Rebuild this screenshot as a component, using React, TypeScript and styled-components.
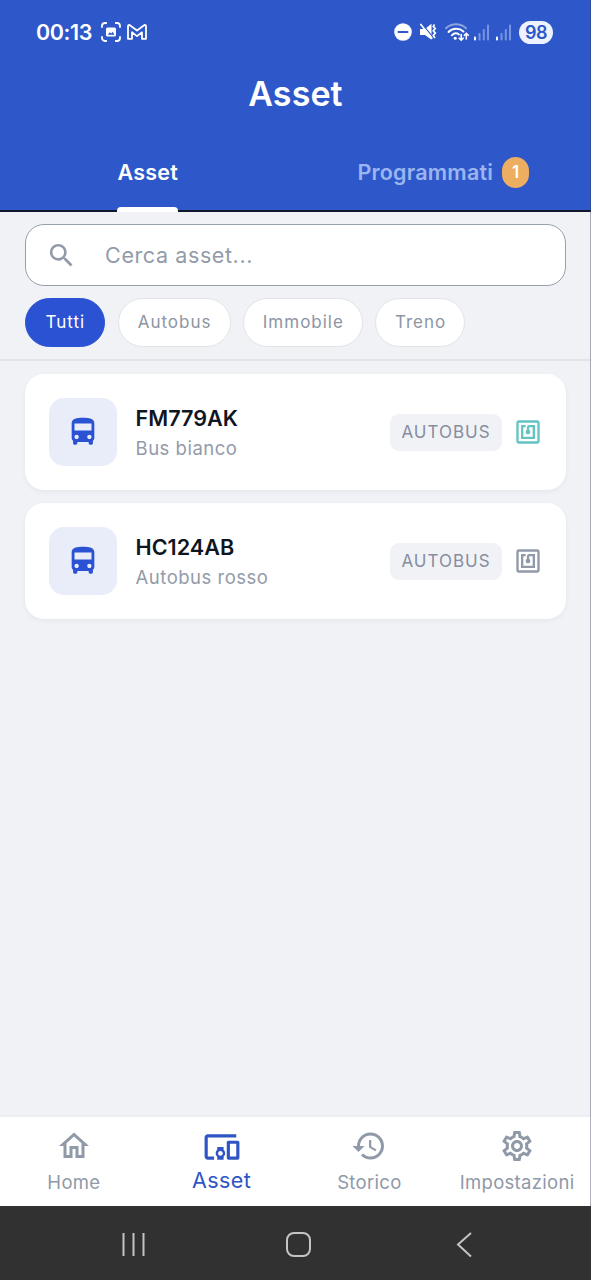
import React from 'react';
import styled, { createGlobalStyle } from 'styled-components';
import {
  MdDevicesOther,
  MdDirectionsBus,
  MdHistory,
  MdNfc,
  MdOutlineHome,
  MdOutlineSettings,
  MdSearch,
} from 'react-icons/md';

const GlobalStyle = createGlobalStyle`
  * { box-sizing: border-box; }
  body { margin: 0; background: #f1f2f6; }
  svg { display: block; flex: none; }
`;

const Screen = styled.div`
  position: relative;
  width: 591px;
  height: 1280px;
  display: flex;
  flex-direction: column;
  overflow: hidden;
  background: #f1f2f6;
  font-family: Inter, 'Liberation Sans', sans-serif;
  color: #929ba9;
`;

const EdgeLine = styled.div`
  position: absolute;
  top: 0;
  right: 0;
  width: 1px;
  height: 1206px;
  background: rgba(60, 66, 88, 0.4);
`;

const Header = styled.header`
  height: 212px;
  flex: none;
  display: flex;
  flex-direction: column;
  background: #2e58c9;
  border-bottom: 2px solid #10182c;
`;

const StatusBar = styled.div`
  height: 64px;
  padding: 0 38px 0 36px;
  display: flex;
  align-items: center;
  justify-content: space-between;
  color: #fff;
`;

const StatusGroup = styled.div`
  display: flex;
  align-items: center;
`;

const Clock = styled.span`
  width: 64.5px;
  font-size: 21.5px;
  font-weight: 600;
  letter-spacing: -0.4px;
  white-space: nowrap;
`;

const Battery = styled.span`
  width: 34px;
  height: 23px;
  margin-left: 7px;
  border-radius: 12px;
  background: #eef2ff;
  color: #2e58c9;
  font-size: 18px;
  font-weight: 600;
  line-height: 23px;
  letter-spacing: -0.4px;
  text-align: center;
`;

const Title = styled.h1`
  margin: 0;
  height: 60px;
  line-height: 59px;
  text-align: center;
  color: #fff;
  font-size: 34px;
  font-weight: 600;
  letter-spacing: 0.1px;
`;

const Tabs = styled.nav`
  height: 88px;
  margin-bottom: -2px;
  display: grid;
  grid-template-columns: 1fr 1fr;
`;

const Tab = styled.div<{ $active?: boolean }>`
  display: flex;
  align-items: center;
  justify-content: center;
  height: 88px;
  padding-top: 8px;
  color: ${(p) => (p.$active ? '#fff' : '#9bb5f0')};
  font-size: 21.5px;
  font-weight: 600;
  letter-spacing: 0.2px;
`;

const TabLabel = styled.span`
  line-height: 80px;
`;

const ActiveTab = styled.div`
  display: flex;
  flex-direction: column;
  align-items: center;
  width: 60px;
`;

const Indicator = styled.i`
  width: 61px;
  height: 5px;
  flex: none;
  border-radius: 4px 4px 0 0;
  background: #fff;
`;

const ActiveText = styled.span`
  height: 75px;
  line-height: 80px;
`;

const Badge = styled.span`
  width: 27px;
  height: 31px;
  margin-left: 9px;
  border-radius: 14px;
  background: #edae62;
  color: #fff;
  font-size: 17px;
  line-height: 31px;
  text-align: center;
  letter-spacing: 0;
`;

const Filters = styled.section`
  height: 149px;
  flex: none;
  padding: 12px 25px 0 24.6px;
  border-bottom: 2px solid #e2e4ea;
`;

const SearchBox = styled.div`
  height: 62px;
  padding-left: 20px;
  display: flex;
  align-items: center;
  gap: 28.5px;
  border: 1px solid #969fac;
  border-radius: 19px;
  background: #fff;
  font-size: 21.5px;
  letter-spacing: 0.6px;
`;

const Chips = styled.div`
  display: flex;
  gap: 12.5px;
  margin-top: 12px;
`;

const Chip = styled.span<{ $w: number; $active?: boolean }>`
  width: ${(p) => p.$w}px;
  height: 49px;
  border-radius: 25px;
  border: 1.5px solid ${(p) => (p.$active ? '#2a52d2' : '#e0e3e8')};
  background: ${(p) => (p.$active ? '#2a52d2' : '#fff')};
  color: ${(p) => (p.$active ? '#fff' : '#8c95a3')};
  font-size: 17px;
  font-weight: 400;
  line-height: 46px;
  letter-spacing: 1px;
  text-indent: 1px;
  text-align: center;
`;

const List = styled.main`
  flex: 1;
  display: flex;
  flex-direction: column;
  gap: 13px;
  padding: 13px 25px 13px 24.6px;
`;

const Card = styled.article`
  height: 116px;
  padding: 0 24px 0 24.4px;
  display: flex;
  align-items: center;
  border-radius: 19px;
  background: #fff;
  box-shadow: 0 2px 5px rgba(20, 30, 60, 0.05);
`;

const AssetIcon = styled.div`
  width: 68px;
  height: 68px;
  display: grid;
  place-items: center;
  border-radius: 15px;
  background: #e9edfa;
  color: #2a52d2;
`;

const AssetText = styled.div`
  flex: 1;
  margin-left: 18.6px;
  padding-top: 2px;
`;

const Plate = styled.div`
  color: #10161f;
  font-size: 21.6px;
  font-weight: 600;
  line-height: 30px;
  letter-spacing: 0;
`;

const Description = styled.div`
  font-size: 18.5px;
  line-height: 30px;
  letter-spacing: 0.5px;
`;

const Tag = styled.span`
  width: 112px;
  height: 37px;
  margin-right: 12.5px;
  border-radius: 9px;
  background: #f1f2f6;
  color: #858ea0;
  font-size: 17px;
  font-weight: 400;
  line-height: 37px;
  letter-spacing: 1px;
  text-indent: 1px;
  text-align: center;
`;

const BottomNav = styled.nav`
  height: 89px;
  flex: none;
  display: grid;
  grid-template-columns: repeat(4, 1fr);
  background: #fff;
  box-shadow: 0 -1px 4px rgba(20, 30, 60, 0.03);
`;

const NavItem = styled.div<{ $active?: boolean }>`
  display: flex;
  flex-direction: column;
  align-items: center;
  padding-top: 11px;
  color: ${(p) => (p.$active ? '#2f55c4' : '#8f99a8')};
  font-size: ${(p) => (p.$active ? 21.5 : 18.5)}px;
  letter-spacing: ${(p) => (p.$active ? 0.4 : 0.3)}px;
  white-space: nowrap;
`;

const NavIcon = styled.div`
  height: 36px;
  display: grid;
  place-items: center;
`;

const NavLabel = styled.span<{ $active?: boolean }>`
  line-height: ${(p) => (p.$active ? 32 : 36)}px;
`;

const SystemBar = styled.footer`
  height: 74px;
  flex: none;
  padding: 3px 118px 0 121px;
  display: flex;
  align-items: center;
  background: #313131;
`;

const CaptureIcon = () => (
  <svg width="20" height="20" viewBox="0 0 20 20" fill="none" stroke="#fff" strokeWidth="1.8" strokeLinecap="round">
    <path d="M1 5V4a3 3 0 0 1 3-3h1.2M14.8 1H16a3 3 0 0 1 3 3v1M19 15v1a3 3 0 0 1-3 3h-1.2M5.2 19H4a3 3 0 0 1-3-3v-1" />
    <rect x="5" y="5.500" width="10" height="9" rx="1.500" fill="#fff" stroke="none" />
    <path d="M6.800 12.800l2-2.600 1.500 1.300 1.300-1.800 1.900 3.100z" fill="#2e58c9" stroke="none" />
  </svg>
);

const MailIcon = () => (
  <svg width="20" height="16" viewBox="0 0 20 16" fill="none" stroke="#fff" strokeWidth="1.800" strokeLinejoin="round">
    <path d="M1 14.800V2.300Q1 .8 2.500 1L10 6.500 17.500 1Q19 .8 19 2.300v12.500h-4V8.300l-5 3.800-5-3.800v6.500z" />
  </svg>
);

const DndIcon = () => (
  <svg width="18" height="18" viewBox="0 0 18 18">
    <circle cx="9" cy="9" r="8.800" fill="#fff" />
    <path d="M4.500 9h9" stroke="#2e58c9" strokeWidth="2" strokeLinecap="round" />
  </svg>
);

const MuteVibrateIcon = () => (
  <svg width="17" height="18" viewBox="0 0 17 18">
    <path d="M0 6h5L11.500 .8v16L5 12H0z" fill="#fff" />
    <path d="M2 .8l11 13.500" stroke="#2e58c9" strokeWidth="1.300" />
    <path d="M.8 1.500l11 13.500" stroke="#fff" strokeWidth="1.700" strokeLinecap="round" />
    <path d="M14.500 1.500l-1.200 2 2 2-2 2.300 2 2.300-2 2.300 1.700 2.600" fill="none" stroke="#fff" strokeWidth="1.700" />
  </svg>
);

const WifiIcon = () => (
  <svg width="24" height="19" viewBox="0 0 24 19" fill="none" stroke="#fff" strokeWidth="1.900" strokeLinecap="round">
    <path d="M1 5.300c5.500-5.400 14.500-5.400 20 0" opacity=".45" />
    <path d="M3.500 9c4-4.200 11-4.200 15-.5M6.800 12.300c2.200-2.200 5-2.400 7.200-.8" />
    <circle cx="10.200" cy="15.200" r="1.500" fill="#fff" stroke="none" />
    <path d="M16.200 11.500V17M14.200 15.200l2 2 2-2M21.300 16v-5.500M19.400 12.300l1.900-2 1.900 2" strokeWidth="1.600" />
  </svg>
);

const SignalIcon = () => (
  <svg width="16" height="17" viewBox="0 0 16 17" fill="#8fa8e8">
    <rect x="0" y="12.500" width="2" height="4" rx=".8" fill="#fff" />
    <rect x="4.500" y="9" width="2" height="7.500" rx=".8" opacity=".75" />
    <rect x="8.800" y="5" width="2" height="11.500" rx=".8" opacity=".75" />
    <rect x="13" y="0.500" width="2" height="16" rx=".8" opacity=".75" />
  </svg>
);

const Gap = styled.i<{ $w: number }>`
  width: ${(p) => p.$w}px;
`;

const assets = [
  { plate: 'FM779AK', description: 'Bus bianco', nfc: '#64c4c4' },
  { plate: 'HC124AB', description: 'Autobus rosso', nfc: '#9099a8' },
];

export default function App() {
  return (
    <Screen>
      <GlobalStyle />
      <Header>
        <StatusBar>
          <StatusGroup>
            <Clock>00:13</Clock>
            <CaptureIcon />
            <Gap $w={6} />
            <MailIcon />
          </StatusGroup>
          <StatusGroup>
            <DndIcon />
            <Gap $w={8} />
            <MuteVibrateIcon />
            <Gap $w={8} />
            <WifiIcon />
            <Gap $w={5} />
            <SignalIcon />
            <Gap $w={6} />
            <SignalIcon />
            <Battery>98</Battery>
          </StatusGroup>
        </StatusBar>
        <Title>Asset</Title>
        <Tabs>
          <Tab $active>
            <ActiveTab>
              <ActiveText>Asset</ActiveText>
              <Indicator />
            </ActiveTab>
          </Tab>
          <Tab>
            <TabLabel>Programmati</TabLabel>
            <Badge>1</Badge>
          </Tab>
        </Tabs>
      </Header>
      <Filters>
        <SearchBox>
          <MdSearch size={31} />
          <span>Cerca asset...</span>
        </SearchBox>
        <Chips>
          <Chip $w={80.5} $active>Tutti</Chip>
          <Chip $w={113}>Autobus</Chip>
          <Chip $w={119.5}>Immobile</Chip>
          <Chip $w={90}>Treno</Chip>
        </Chips>
      </Filters>
      <List>
        {assets.map((asset) => (
          <Card key={asset.plate}>
            <AssetIcon>
              <MdDirectionsBus size={34} />
            </AssetIcon>
            <AssetText>
              <Plate>{asset.plate}</Plate>
              <Description>{asset.description}</Description>
            </AssetText>
            <Tag>AUTOBUS</Tag>
            <MdNfc size={28} color={asset.nfc} />
          </Card>
        ))}
      </List>
      <BottomNav>
        <NavItem>
          <NavIcon><MdOutlineHome size={36} /></NavIcon>
          <NavLabel>Home</NavLabel>
        </NavItem>
        <NavItem $active>
          <NavIcon><MdDevicesOther size={38} /></NavIcon>
          <NavLabel $active>Asset</NavLabel>
        </NavItem>
        <NavItem>
          <NavIcon><MdHistory size={36} /></NavIcon>
          <NavLabel>Storico</NavLabel>
        </NavItem>
        <NavItem>
          <NavIcon><MdOutlineSettings size={36} /></NavIcon>
          <NavLabel>Impostazioni</NavLabel>
        </NavItem>
      </BottomNav>
      <SystemBar>
        <svg width="24" height="25" viewBox="0 0 24 25" stroke="#c4c4c4" strokeWidth="2">
          <path d="M2.500 1v23M12.500 1v23M22.500 1v23" />
        </svg>
        <Gap $w={141} />
        <svg width="26" height="26" viewBox="0 0 26 26" fill="none" stroke="#c4c4c4" strokeWidth="2">
          <rect x="1" y="1" width="23" height="23" rx="7" />
        </svg>
        <Gap $w={143} />
        <svg width="18" height="26" viewBox="0 0 18 26" fill="none" stroke="#c4c4c4" strokeWidth="2">
          <path d="M16 1L3 12.500l13 12" />
        </svg>
      </SystemBar>
      <EdgeLine />
    </Screen>
  );
}
